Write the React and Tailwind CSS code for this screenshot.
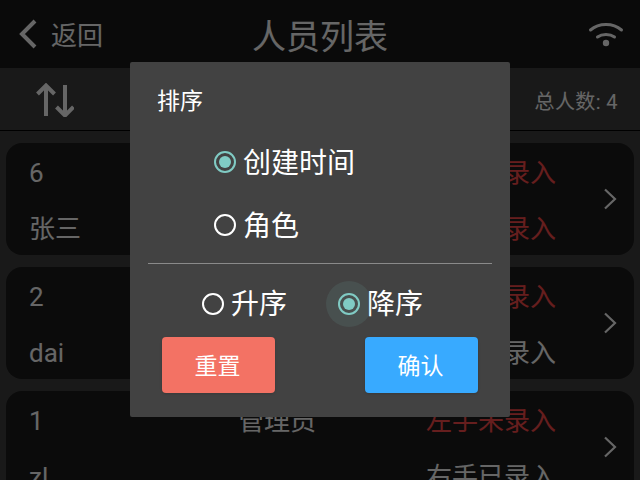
import { useState } from 'react'

const font = "font-['Roboto','Noto_Sans_CJK_SC',sans-serif]"

const people = [
  { id: '6', name: '张三', role: '', left: '左手未录入', right: '右手未录入', leftBad: true, rightBad: true },
  { id: '2', name: 'dai', role: '', left: '左手未录入', right: '右手已录入', leftBad: true, rightBad: false },
  { id: '1', name: 'zl', role: '管理员', left: '左手未录入', right: '右手已录入', leftBad: true, rightBad: false },
]

function PersonCard({ person }) {
  return (
    <div className="flex h-[112px] shrink-0 items-center rounded-2xl bg-[#1c1c1c] pl-[23px] pr-4">
      <div className="flex-1 pt-[3px] text-[26px] leading-[56px]">
        <div className="flex">
          <span className="w-[209px]">{person.id}</span>
          <span className="w-[188px]">{person.role}</span>
          <span className={person.leftBad ? 'text-[#ff4d4d]' : ''}>{person.left}</span>
        </div>
        <div className="flex">
          <span className="w-[397px]">{person.name}</span>
          <span className={person.rightBad ? 'text-[#ff4d4d]' : ''}>{person.right}</span>
        </div>
      </div>
      <svg width="14" height="22" viewBox="0 0 14 22" fill="none" stroke="currentColor" strokeWidth="2.2" className="mr-[1px]">
        <path d="M2 1.5 L12 11 L2 20.5" />
      </svg>
    </div>
  )
}

function Radio({ checked, halo }) {
  return (
    <span className="relative flex h-[22px] w-[22px] shrink-0 items-center justify-center">
      {halo && <span className="absolute -inset-3 rounded-full bg-[#80cbc4]/10" />}
      <span className={`relative flex h-[22px] w-[22px] items-center justify-center rounded-full border-2 ${checked ? 'border-[#80cbc4]' : 'border-white'}`}>
        {checked && <span className="h-3 w-3 rounded-full bg-[#80cbc4]" />}
      </span>
    </span>
  )
}

function Option({ label, checked, halo, className, labelClass }) {
  return (
    <div className={`flex h-10 items-center gap-[7px] ${className}`}>
      <Radio checked={checked} halo={halo} />
      <span className={`text-[28px] leading-[40px] text-white ${labelClass}`}>{label}</span>
    </div>
  )
}

export default function App() {
  const [order] = useState('desc')

  return (
    <div className={`relative flex h-[480px] w-[640px] flex-col overflow-hidden bg-[#404040] text-white ${font}`}>
      <header className="flex h-[68px] shrink-0 items-center justify-between bg-[#191919] pl-[19px] pr-4">
        <div className="flex w-[197px] items-center gap-[14px]">
          <svg width="18" height="30" viewBox="0 0 18 30" fill="none" stroke="currentColor" strokeWidth="4">
            <path d="M16 2 L3 15 L16 28" />
          </svg>
          <span className="mt-1 text-[26px]">返回</span>
        </div>
        <h1 className="mt-[6px] text-[34px] font-normal">人员列表</h1>
        <div className="flex w-[200px] justify-end">
          <svg width="36" height="26" viewBox="0 0 36 26" fill="none" stroke="currentColor" strokeWidth="3" strokeLinecap="round">
            <path d="M2.5 9 C11 1.7 25 1.7 33.5 9" />
            <path d="M9.5 16 C14 12.7 22 12.7 26.5 16" />
            <circle cx="18" cy="22" r="3.2" fill="currentColor" stroke="none" />
          </svg>
        </div>
      </header>

      <div className="flex h-[63px] shrink-0 items-center justify-between border-b border-black pl-9 pr-[22px]">
        <svg width="38" height="34" viewBox="0 0 38 34" fill="none" stroke="currentColor" strokeWidth="4" className="mt-[2px]">
          <path d="M10 33 V3 M1.5 11 L10 2.5 L18.5 11" />
          <path d="M29 2 V32 M20.5 24 L29 32.5 L37.5 24" />
        </svg>
        <span className="mt-[6px] text-[20px] tracking-[0.4px]">总人数: 4</span>
      </div>

      <div className="flex flex-col gap-3 px-[6px] pt-3">
        {people.map((person) => (
          <PersonCard key={person.id} person={person} />
        ))}
      </div>

      {/* dim layer */}
      <div className="absolute inset-0 bg-black/60" />

      <div className="absolute left-[130px] top-[62px] flex h-[355px] w-[380px] flex-col rounded-[2px] bg-[#424242] px-[18px]">
        <div className="mt-[25px] pl-[9px] text-[23px] leading-[30px] text-white">排序</div>
        <div className="mt-[25px] flex flex-col gap-[23px] pl-[66px]">
          <Option label="创建时间" checked labelClass="mt-1" />
          <Option label="角色" labelClass="mt-1" />
        </div>
        <div className="mt-[18px] h-px bg-[#8a8a8a]" />
        <div className="mt-[20px] flex pl-[54px]">
          <Option label="升序" checked={order === 'asc'} className="w-[136px]" labelClass="mt-[2px]" />
          <Option label="降序" checked={order === 'desc'} halo labelClass="mt-[2px]" />
        </div>
        <div className="mt-[13px] flex justify-between px-[14px]">
          <button className="h-14 w-[113px] rounded bg-[#f37264] pr-[2px] pt-[5px] text-[23px] text-white shadow-sm">重置</button>
          <button className="h-14 w-[113px] rounded bg-[#38aaff] pr-[2px] pt-[5px] text-[23px] text-white shadow-sm">确认</button>
        </div>
      </div>
    </div>
  )
}
